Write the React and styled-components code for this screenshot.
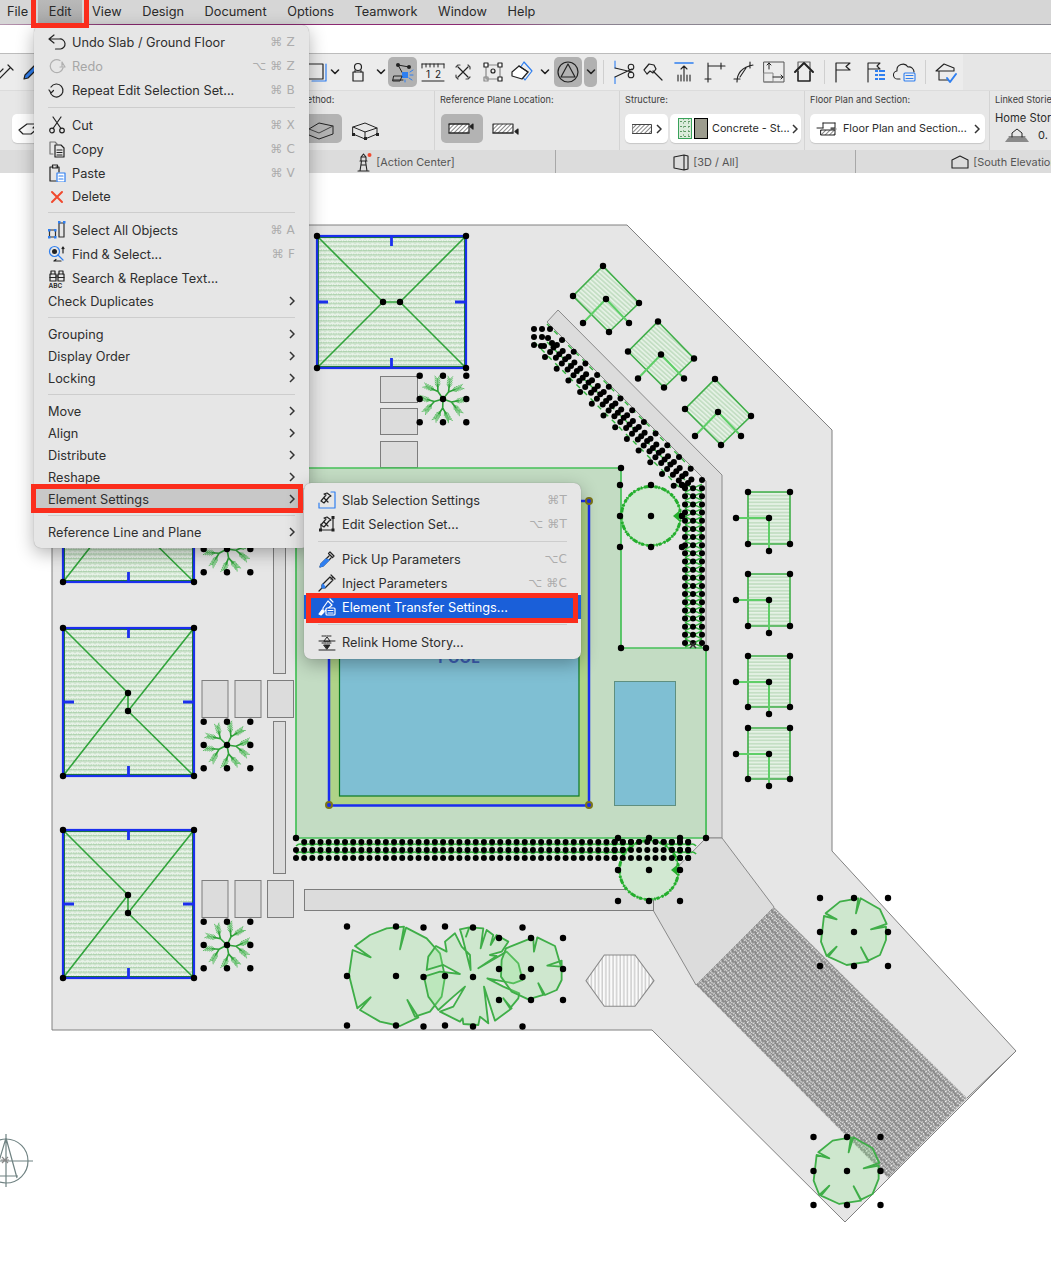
import React from 'react';
import styled, { createGlobalStyle } from 'styled-components';

const Global = createGlobalStyle`
  html, body { margin: 0; padding: 0; background: #fff; }
  body { font-family: Inter, "Liberation Sans", "DejaVu Sans", sans-serif; }
`;

const Page = styled.div`
  position: relative; width: 1051px; height: 1267px; overflow: hidden; background: #fff;
  color: #2b2b2b; -webkit-font-smoothing: antialiased;
`;

const MenuBar = styled.div`
  display: flex; align-items: center; height: 24px; padding-left: 0; background: #d6d6d6;
  border-bottom: 1px solid; border-image: linear-gradient(90deg,#b59ab0,#8c2a72 12%,#8c2a72 45%,#8a8290 55%,#8f8f96) 1;
  font-size: 12.75px; color: #2a2a2a;
`;
const MenuItem = styled.div`
  height: 24px; line-height: 23px; padding: 0 10.3px; white-space: nowrap;
  ${p => p.$first && 'padding-left: 7px;'}
  ${p => p.$active && 'background: linear-gradient(#b9b9b9,#a9a9a9);'}
`;
const WhiteStrip = styled.div` height: 28px; background: #fff; `;

const Toolbar = styled.div`
  display: flex; align-items: center; height: 36px; background: #ececec; border-top: 1px solid #bcbcbc; 
`;
const Tool = styled.div`
  flex: none; display: flex; align-items: center; justify-content: center; height: 30px;
  width: ${p => p.$w || 30}px; margin-left: ${p => p.$ml || 0}px; border-radius: 5px;
  background: ${p => (p.$active ? '#b1b1b1' : 'transparent')};
`;
const ToolSep = styled.div` flex: none; width: 1px; height: 24px; background: #cfcfcf; margin-left: ${p => p.$ml || 0}px; `;
const ToolFiller = styled.div` flex: 1; align-self: stretch; margin-left: 2px; background: #e6e6e6; `;

const InfoBar = styled.div` display: flex; height: 60px; background: #e7e7e7; border-top: 1px solid #dcdcdc; box-sizing: border-box; `;
const InfoSection = styled.div`
  flex: none; box-sizing: border-box; width: ${p => p.$w}px; padding: 3px 0 0 5px; white-space: nowrap; overflow: hidden;
  border-right: ${p => (p.$last ? 'none' : '1px solid #d4d4d4')};
`;
const InfoLabel = styled.div` font-size: 9.2px; line-height: 12px; height: 12px; color: #3d3d3d; `;
const InfoRow = styled.div` display: flex; gap: 2px; margin-top: 8px; margin-left: ${p => p.$ml || 0}px; `;
const ParamButton = styled.div`
  flex: none; box-sizing: border-box; display: flex; align-items: center; height: 29px; width: ${p => p.$w}px;
  padding: 0 ${p => p.$pr ?? p.$pad ?? 0}px 0 ${p => p.$pad || 0}px; gap: ${p => p.$gap || 4}px; border-radius: 5px; font-size: 10.8px; color: #2a2a2a;
  justify-content: ${p => p.$between ? 'space-between' : 'center'};
  background: ${p => (p.$active ? '#b3b3b3' : p.$white ? '#fff' : 'transparent')};
  box-shadow: ${p => (p.$white ? '0 1px 1px rgba(0,0,0,.14)' : 'none')};
`;
const ButtonText = styled.span` flex: 1; white-space: nowrap; margin-left: ${p => p.$ml || 0}px; `;
const Swatch = styled.span`
  flex: none; display: block; width: ${p => p.$w || 14}px; height: 21px; box-sizing: border-box;
  background: ${p => p.$bg}; border: 1px solid ${p => p.$bd};
`;
const HomeStory = styled.div` font-size: 11.2px; line-height: 14px; margin-top: 5px; `;
const StoryRow = styled.div` display: flex; align-items: center; gap: 7px; margin-left: 8px; font-size: 11px; height: 18px; margin-top: 1px; `;

const TabBar = styled.div` display: flex; height: 23px; background: #dcdcdc; `;
const Tab = styled.div`
  flex: none; box-sizing: border-box; width: ${p => p.$w || 300}px; display: flex; align-items: center; justify-content: center; gap: 3px;
  font-size: 10.9px; color: #555; white-space: nowrap;
  border-left: ${p => (p.$sep ? '1px solid #a8a8a8' : 'none')};
`;

const Plan = styled.svg` display: block; width: 1051px; height: 1094px; `;

const Menu = styled.div`
  position: absolute; left: ${p => p.$x}px; top: ${p => p.$y}px; width: ${p => p.$w}px; box-sizing: border-box; padding: 5px 0;
  background: #e6e6e6; border-radius: 7px; z-index: 5; font-size: 12.75px; color: #2e2e2e;
  box-shadow: 0 0 1px rgba(0,0,0,.35), 0 5px 18px rgba(0,0,0,.3);
`;
const Item = styled.div`
  display: flex; align-items: center; gap: 6px; height: ${p => p.$h || 24}px; padding: 0 14px; white-space: nowrap;
  color: ${p => (p.$dim ? '#a6a6a6' : p.$on ? '#fff' : 'inherit')};
  background: ${p => (p.$sel ? '#c8c8c8' : p.$on ? '#1a5fd9' : 'transparent')};
`;
const ItemIcon = styled.span` flex: none; width: 18px; height: 20px; display: flex; align-items: center; justify-content: center; `;
const ItemLabel = styled.span` flex: 1; `;
const Shortcut = styled.span`
  color: #acacac; font-size: 12px; letter-spacing: .2px; font-family: "DejaVu Sans", Inter, sans-serif;
`;
const Sep = styled.div` height: 1px; margin: ${p => p.$t ?? 5}px 14px 5px; background: #cdcdcd; `;
const Chev = styled.svg` width: 6px; height: 10px; fill: none; stroke: #333; stroke-width: 1.5; flex: none; `;
const Mark = styled.div`
  position: absolute; box-sizing: border-box; z-index: 9; border: 5px solid #fb2d1c; pointer-events: none;
  left: ${p => p.$x}px; top: ${p => p.$y}px; width: ${p => p.$w}px; height: ${p => p.$h}px;
`;
const Ico = styled.svg`
  display: block; flex: none; fill: none; stroke: ${p => p.$c || '#222'}; stroke-width: ${p => p.$sw || 1.2};
  stroke-linecap: round; stroke-linejoin: round;
`;
const I = ({ s = 24, w, h, c, sw, children }) => (
  <Ico width={w || s} height={h || s} viewBox={`0 0 ${w || s} ${h || s}`} $c={c} $sw={sw}>{children}</Ico>
);
const Arrow = () => <Chev viewBox="0 0 6 10"><path d="M1 1l4 4-4 4" /></Chev>;
const Down = () => <I w={10} h={8} sw={1.6}><path d="M1.5 2l3.5 3.5L8.5 2" /></I>;
const B = '#2f7ff0';

/* ---------- menu icons ---------- */
const UndoI = () => <I s={18}><path d="M1 6l5-4M1 6l5 4M1.5 6h10a5 5 0 0 1 1 10h-5" /></I>;
const RedoI = () => <I s={18} c="#b0b0b0"><path d="M17 10l-3-5v4M17 10l-5 0M15 11A6.5 6.5 0 1 1 12 3.5" /></I>;
const RepeatI = () => <I s={18}><path d="M3 6a6.5 6.5 0 1 1-1 4M1 9l2 3 2.5-2.5" /></I>;
const CutI = () => <I s={18}><circle cx="4" cy="14.5" r="2.3" /><circle cx="14" cy="14.5" r="2.3" /><path d="M5 12.5L13 1M13 12.5L5 1" /></I>;
const CopyI = () => <I s={18}><path d="M5 14H2V2h5l2 2" stroke="#777" /><path d="M7 5h6l3 3v9H7zM9 10h5M9 12.5h5M9 15h5" /></I>;
const PasteI = () => <I s={18}><path d="M5 3H2v14h6M11 8V3H8" /><rect x="4.5" y="1" width="5" height="3" /><path d="M9 9h8v9H9z" fill="#fff" stroke={B} /><path d="M11 12h4M11 15h4" stroke={B} /></I>;
const DeleteI = () => <I s={16} c="#f0492e" sw={2}><path d="M3 3l10 10M13 3L3 13" /></I>;
const SelectAllI = () => <I s={18}><rect x="1.5" y="9" width="6" height="7" stroke="#333" /><rect x="11" y="2" width="5" height="14" stroke="#333" /><g fill={B} stroke="none"><rect x="0" y="8" width="2.5" height="2.5" /><rect x="0" y="15" width="2.5" height="2.5" /><rect x="6" y="8" width="2.5" height="2.5" /><rect x="6" y="15" width="2.5" height="2.5" /><rect x="10" y="0" width="2.5" height="2.5" /><rect x="15" y="0" width="2.5" height="2.5" /></g></I>;
const FindI = () => <I s={18}><circle cx="6.5" cy="6.5" r="5" stroke={B} /><circle cx="6.5" cy="6.5" r="2.5" fill="#222" stroke="none" /><path d="M10 10l5 5" stroke={B} /><path d="M15 2v6M14 3.5l1-1.5 1 1.5M6 16h7M6 16l2-1.5" /></I>;
const SearchI = () => <I w={18} h={20}><rect x="2" y="6" width="6" height="7" /><rect x="10" y="6" width="6" height="7" /><path d="M3 6V3h4v3M11 6V3h4v3M8 8h2M2 9.5h6M10 9.5h6" /><text x="0.5" y="19.5" fontSize="6.5" stroke="none" fill="#222" fontFamily="Inter" fontWeight="600">ABC</text></I>;
const HammerI = ({ c = '#222' }) => <path d="M3 10l5-6-2-1 3-1 4 3-2 1-5 6zM6 7l4 4" stroke={c} />;
const SlabSelI = () => <I s={18}><HammerI /><path d="M13 1h4v16H1v-5" stroke={B} /></I>;
const EditSelI = () => <I s={18}><HammerI /><path d="M15 2v13H3V9" /><g fill="#222" stroke="none"><rect x="1" y="13.5" width="3" height="3" /><rect x="13.5" y="13.5" width="3" height="3" /><rect x="13.5" y="1" width="3" height="3" /></g></I>;
const PickI = () => <I s={18}><path d="M12 2l4 4-1.5 1.5-4-4zM11 6L3 14l-1 3 3-1 8-8" /><path d="M2 17l1-3 5-5 3 1-6 6z" fill={B} stroke={B} /></I>;
const InjectI = () => <I s={18}><path d="M13 1l4 4M15 3l-2 2M12 3l3 3-8 8H4v-3zM4 14l-3 3" /><path d="M5 10l2 3-1 1H4v-2z" fill={B} stroke={B} /></I>;
const TransferI = () => <I s={18} c="#fff"><path d="M12 1l3 3M10 3l4 4-7 6H5v-3z" /><path d="M1 16l3-4 2 2-3 3z" fill="#fff" /><rect x="8" y="10" width="9" height="7" rx="1" fill="#1a5fd9" /><path d="M10 12.5h5M10 15h5" /></I>;
const RelinkI = () => <I s={18} sw={1}><path d="M1 8h16M1 17h16M6 8l3-4 3 4z" /><path d="M4 3h10M4 10h10" strokeDasharray="1.5 1" /><path d="M6 12h6l-3 4z" fill="#222" /></I>;

/* ---------- toolbar icons ---------- */
const T = {
  pen: <I s={20}><path d="M4 16L14 6M12 3l5 5" /><path d="M-4 18L7 7" stroke="#222" /></I>,
  pick: <I s={20}><path d="M14 4l3 3-9 9-4 1 1-4z" fill={B} stroke="#222" /></I>,
  rect: <I s={22}><rect x="2" y="3" width="15" height="15" stroke="#222" /><path d="M20 3v17H6" stroke={B} /></I>,
  lock: <I s={22}><circle cx="11" cy="6" r="3.5" /><path d="M6 11h10v9H6z" /><path d="M8 9.5v1.5M14 9.5v1.5" /></I>,
  snap: <I s={24} sw={1}><circle cx="7" cy="5" r="2" fill="#222" stroke="none" /><circle cx="18" cy="7" r="2" fill="#222" stroke="none" /><path d="M7 5l11 2M7 5l5 9" /><rect x="11" y="12" width="6" height="6" fill={B} stroke="none" /><path d="M2 20h10M3 16h8l-2 5H2z" /><path d="M19 12l3-2M19 15h3M18 18l3 2M14 20v2" stroke={B} /></I>,
  ruler: <I s={24} sw={1}><path d="M1 4h22M1 21h22M1 4v4M23 4v4M5 4v3M9 4v3M13 4v3M17 4v3" /><text x="5" y="18" fontSize="10" fill="#222" stroke="none" fontFamily="Inter">1</text><text x="14" y="18" fontSize="10" fill="#222" stroke="none" fontFamily="Inter">2</text></I>,
  cross: <I s={22}><path d="M6 6l10 10M16 6L6 16" /><path d="M8 4H6L4 6M18 8V6l-2-2M14 18h2l2-2M4 14v2l2 2" stroke="#444" /></I>,
  grid: <I s={24}><rect x="5" y="5" width="14" height="14" stroke="#888" /><g fill="#fff" stroke="#222"><rect x="3" y="3" width="4" height="4" /><rect x="17" y="3" width="4" height="4" /><rect x="17" y="17" width="4" height="4" /></g><rect x="3" y="17" width="4" height="4" stroke="#888" fill="none" /><circle cx="12" cy="11" r="2" /></I>,
  dia: <I s={24}><path d="M14 2l8 9-7 9-7-9z" stroke={B} /><path d="M2 12l7-6 9 6-6 7-10-3z" fill="#fff" /><path d="M9 6l9 6" /></I>,
  tri: <I s={24}><circle cx="12" cy="12" r="10" /><path d="M12 4l7 13H5z" /></I>,
  sci: <I s={24} sw={1.1}><path d="M3 1v7M3 17v7" stroke={B} /><path d="M3 8l17 4M3 17l17-8" /><circle cx="19" cy="7" r="2.8" /><circle cx="19" cy="15" r="2.8" /></I>,
  axe: <I s={24}><path d="M2 10l5-6 5 1 2 4-3 4-3-2-3 3zM11 11l9 9" /></I>,
  up: <I s={24} sw={1.1}><path d="M3 3h18" stroke={B} strokeWidth="1.6" /><path d="M12 6v15M9 9l3-3 3 3M6 15v6M9 15v6M15 15v6M18 15v6" /></I>,
  corner: <I s={24} sw={1.1}><path d="M6 22V6h17M3 19h6M6 3v3M19 3v6" /></I>,
  arc: <I s={24} sw={1.1}><path d="M5 22C5 13 11 7 21 5M2 19h6M18 2v6M14 8l-6 9" stroke="#222" /></I>,
  mov: <I s={24} sw={1}><rect x="2" y="2" width="20" height="20" stroke="#555" /><rect x="2" y="13" width="9" height="9" stroke="#888" /><path d="M7 9V3M5 5l2-2 2 2M11 17h10M19 15l2 2-2 2" /></I>,
  house: <I s={24}><path d="M6 8V2h12v6" stroke="#666" /><path d="M6 11v10h12V11" strokeWidth="1.6" /><path d="M3 12l9-9 9 9" strokeWidth="2" /></I>,
  flag: <I s={22}><path d="M4 21V2h14l-4 3.5 4 3.5H4" /></I>,
  flagList: <I s={24} sw={1.1}><path d="M5 22V3h12l-3 3 3 3H5" /><g fill={B} stroke="none"><rect x="12" y="10" width="3" height="2" /><rect x="16" y="10" width="6" height="2" /><rect x="12" y="14" width="3" height="2" /><rect x="16" y="14" width="6" height="2" /><rect x="12" y="18" width="3" height="2" /><rect x="16" y="18" width="6" height="2" /></g></I>,
  cloud: <I s={24} sw={1.1}><path d="M7 19H5a4 4 0 0 1-1-8 6 6 0 0 1 11-4 5 5 0 0 1 6 5" /><rect x="11" y="13" width="11" height="8" rx="1" stroke={B} fill="#ececec" /><path d="M13 15.5h7M13 18.5h7" stroke={B} /></I>,
  houseCheck: <I s={24} sw={1.1}><path d="M2 11l8-7 10 4v3H2zM5 11v9h9" /><path d="M13 18l3 4 6-8" stroke={B} strokeWidth="2" /></I>,
};

/* ---------- plan helpers ---------- */
const Dot = ({ x, y, r = 3.2 }) => <circle cx={x} cy={y} r={r} fill="#000" />;
const Handles9 = ({ cx, cy, dx, dy }) => (
  <g>{[-1, 0, 1].flatMap(a => [-1, 0, 1].map(b => <Dot key={a + '_' + b} x={cx + a * dx} y={cy + b * dy} />))}</g>
);

const StarTree = ({ x, y, rot = 10 }) => {
  const seg = [];
  const thick = [];
  for (let i = 0; i < 5; i++) {
    const a0 = (rot + i * 72) * Math.PI / 180;
    const fx = Math.cos(a0) * 9, fy = Math.sin(a0) * 9;
    thick.push(`M0 0L${fx} ${fy}`);
    [-0.55, 0.55].forEach(d => {
      const a = a0 + d;
      const ex = fx + Math.cos(a) * 13.5, ey = fy + Math.sin(a) * 13.5;
      thick.push(`M${fx} ${fy}L${fx + (ex - fx) * .55} ${fy + (ey - fy) * .55}`);
      [0.3, 0.45, 0.6, 0.75, 0.9].forEach(t => {
        const px = fx + (ex - fx) * t, py = fy + (ey - fy) * t;
        [-0.6, 0.6].forEach(s => seg.push(`M${px} ${py}l${Math.cos(a + s) * 4.6} ${Math.sin(a + s) * 4.6}`));
      });
      seg.push(`M${fx + (ex - fx) * .5} ${fy + (ey - fy) * .5}L${ex} ${ey}`);
    });
  }
  return (
    <g transform={`translate(${x} ${y})`} fill="none">
      <path d={seg.join('')} stroke="#4fb958" strokeWidth=".85" />
      <path d={thick.join('')} stroke="#2ea038" strokeWidth="1.6" />
    </g>
  );
};

const Roof = ({ x, y, w, h, c1, c2 }) => (
  <g>
    <rect x={x} y={y} width={w} height={h} fill="url(#roof)" />
    <path d={`M${x} ${y}L${c1[0]} ${c1[1]}L${c2[0]} ${c2[1]}L${x + w} ${y}M${x} ${y + h}L${c1[0]} ${c1[1]}M${x + w} ${y + h}L${c2[0]} ${c2[1]}`} stroke="#31a43b" strokeWidth="1.6" fill="none" />
    <rect x={x + 1.5} y={y + 1.5} width={w - 3} height={h - 3} fill="none" stroke="#1d7a35" strokeWidth="1" />
    <rect x={x} y={y} width={w} height={h} fill="none" stroke="#1b2fee" strokeWidth="2.2" />
    <path d={`M${x + w / 2} ${y}v10M${x + w / 2} ${y + h}v-10M${x} ${y + h / 2}h11M${x + w} ${y + h / 2}h-11`} stroke="#1b2fee" strokeWidth="2.8" fill="none" />
    {[[x, y], [x + w, y], [x, y + h], [x + w, y + h], c1, c2].map((p, i) => <Dot key={i} x={p[0]} y={p[1]} />)}
  </g>
);

const Planter = ({ pts, c, l, r, fill }) => (
  <g>
    <polygon points={pts.map(p => p.join(',')).join(' ')} fill={fill} stroke="#3fae48" strokeWidth="1.6" />
    <path d={`M${c[0]} ${c[1]}L${l[0]} ${l[1]}M${c[0]} ${c[1]}L${r[0]} ${r[1]}`} stroke="#5fcf68" strokeWidth="2" />
    {[...pts, c, l, r].map((p, i) => <Dot key={i} x={p[0]} y={p[1]} />)}
  </g>
);

const RoundTree = ({ x, y, r }) => (
  <g>
    <circle cx={x} cy={y} r={r} fill="#d2e8d2" />
    <circle cx={x} cy={y} r={r - .5} fill="none" stroke="#3cba45" strokeWidth="1.4" />
    <circle cx={x} cy={y} r={r - .5} fill="none" stroke="#24ae2d" strokeWidth="3" strokeDasharray="3 .9 1.5 1.8 5 1.2 2 2.4" />
    <path d={`M${x + r - 8} ${y}l6 -5v10z`} fill="#24ae2d" />
  </g>
);

const treeFill = { fill: '#8ee98e', fillOpacity: .27, stroke: '#3fae48', strokeWidth: 5.5, strokeLinejoin: 'round' };
const T1 = 'M225,378L272,412L218,390L207,465L232,565L272,532L240,570L300,605L360,618L415,592L382,540L405,590L450,575L485,530L495,470L480,400L440,355L378,323L360,388L372,320L320,325L270,345Z';
const T2 = 'M445,410L468,378L500,395L495,365L525,340L545,380L570,405L572,450L548,355L540,328L568,322L558,350L568,322L610,325L602,385L620,330L640,345L632,375L650,345L685,365L665,395L630,405L650,408L595,445L680,395L715,430L728,480L700,490L622,475L670,500L718,520L715,535L690,565L670,535L695,565L645,602L612,500L625,610L600,590L595,615L550,612L548,595L540,605L480,575L520,560L555,500L520,530L475,570L445,530L432,470L480,455L540,462L490,435L440,450Z';
const T3 = 'M678,385L760,352L762,395L772,352L825,378L843,440L802,437L845,422L845,480L830,510L795,525L775,490L790,525L745,538L695,515L663,470L665,420Z';
const T4 = 'M527,250L560,268L522,258L513,335L530,378L560,350L535,380L590,405L655,395L633,352L655,392L690,375L708,330L708,290L663,298L710,282L690,238L632,205L618,250L625,205L570,215Z';

const hedgeBottom = [];
for (let r = 0; r < 3; r++) for (let k = r === 0 ? 1 : 0; k <= 48; k++) hedgeBottom.push([296 + k * 8.17, 842 + r * 8]);
const hedgeRight = [];
[685, 693, 702].forEach((x, i) => { for (let k = i === 2 ? 0 : 1; k <= 20; k++) hedgeRight.push([x, 480 + k * 8.15]); });
const hedgeDiag = [[534, 329], [542, 329], [550, 329], [534, 337], [542, 337], [534, 345], [548, 338], [544, 346], [552, 343], [541, 346]];
for (let i = 0; i < 12; i++) {
  const x = 553.5 + i * 11.7, y = 348.5 + i * 11.7;
  hedgeDiag.push([x + 8.5, y - 8.5], [x - 8.5, y + 8.5], [x + 3.4, y - 3.4], [x - 3.4, y + 3.4], [x + 9.2, y + 2.4], [x + 2.4, y + 9.2], [x, y - 1], [x + 5.8, y + 5.8]);
}

const MenuGroup1 = [
  ['Undo Slab / Ground Floor', '⌘ Z', <UndoI />], ['Redo', '⌥ ⌘ Z', <RedoI />, true], ['Repeat Edit Selection Set...', '⌘ B', <RepeatI />], 0,
  ['Cut', '⌘ X', <CutI />], ['Copy', '⌘ C', <CopyI />], ['Paste', '⌘ V', <PasteI />], ['Delete', '', <DeleteI />, false, 23], 1,
  ['Select All Objects', '⌘ A', <SelectAllI />], ['Find & Select...', '⌘ F', <FindI />], ['Search & Replace Text...', '', <SearchI />],
];

export default function App() {
  return (
    <Page>
      <Global />
      <MenuBar>
        {['File', 'Edit', 'View', 'Design', 'Document', 'Options', 'Teamwork', 'Window', 'Help'].map((m, i) => (
          <MenuItem key={m} $first={i === 0} $active={m === 'Edit'}>{m}</MenuItem>
        ))}
      </MenuBar>
      <WhiteStrip />
      <Toolbar>
        <Tool $w={12}>{T.pen}</Tool>
        <Tool $w={36}>{T.pick}</Tool>
        <Tool $w={257} />
        <Tool $w={24}>{T.rect}</Tool>
        <Tool $w={12}><Down /></Tool>
        <Tool $w={24} $ml={5}>{T.lock}</Tool>
        <Tool $w={12} $ml={5}><Down /></Tool>
        <Tool $w={29} $ml={1} $active>{T.snap}</Tool>
        <Tool $w={28} $ml={2}>{T.ruler}</Tool>
        <Tool $ml={1}>{T.cross}</Tool>
        <Tool>{T.grid}</Tool>
        <Tool $w={28}>{T.dia}</Tool>
        <Tool $w={12} $ml={3}><Down /></Tool>
        <Tool $w={28} $ml={3} $active>{T.tri}</Tool>
        <Tool $w={13} $ml={2} $active><Down /></Tool>
        <ToolSep $ml={6} />
        <Tool $ml={5}>{T.sci}</Tool>
        <Tool>{T.axe}</Tool>
        <Tool>{T.up}</Tool>
        <Tool>{T.corner}</Tool>
        <Tool>{T.arc}</Tool>
        <Tool>{T.mov}</Tool>
        <Tool>{T.house}</Tool>
        <ToolSep $ml={5} />
        <Tool $ml={3}>{T.flag}</Tool>
        <Tool $ml={2}>{T.flagList}</Tool>
        <Tool>{T.cloud}</Tool>
        <ToolSep $ml={5} />
        <Tool $ml={5}>{T.houseCheck}</Tool>
        <ToolFiller />
      </Toolbar>
      <InfoBar>
        <InfoSection $w={248}>
          <InfoLabel />
          <InfoRow $ml={7}>
            <ParamButton $w={60} $white $pad={5} $between><I s={24}><path d="M2 13l8-6h10l-4 4h5l-7 6-8 0z" /></I></ParamButton>
          </InfoRow>
        </InfoSection>
        <InfoSection $w={187}>
          <InfoLabel>Geometry Method:</InfoLabel>
          <InfoRow $ml={47}>
            <ParamButton $w={42} $active><I s={30} sw={1}><path d="M3 15l10-6 14 3v8L13 25 3 21z" /><path d="M3 15l10 4 14-7M3 21" stroke="#444" /></I></ParamButton>
            <ParamButton $w={42}><I s={30} sw={1}><path d="M3 13l12-4 12 5v6l-12 5-12-5zM3 13l12 5 12-4M15 18v7" /><g fill="#222" stroke="none"><rect x="2" y="19" width="3" height="3" /><rect x="14" y="23" width="3" height="3" /><rect x="26" y="19" width="3" height="3" /></g></I></ParamButton>
          </InfoRow>
        </InfoSection>
        <InfoSection $w={185}>
          <InfoLabel>Reference Plane Location:</InfoLabel>
          <InfoRow $ml={1}>
            <ParamButton $w={42} $active><I w={32} h={20}><rect x="3" y="5" width="20" height="9" fill="url(#ih)" stroke="#333" /><path d="M3 5h20M3 14h20" /><path d="M27 5l-3 2.5 3 2.5z" fill="#222" /></I></ParamButton>
            <ParamButton $w={42}><I w={32} h={20}><rect x="3" y="5" width="20" height="9" fill="url(#ih)" stroke="#333" /><path d="M3 14h20" /><path d="M28 10l-3 2.5 3 2.5z" fill="#222" /></I></ParamButton>
          </InfoRow>
        </InfoSection>
        <InfoSection $w={185}>
          <InfoLabel>Structure:</InfoLabel>
          <InfoRow>
            <ParamButton $w={43} $white $pad={7} $between>
              <I w={20} h={10} sw={1}><rect x=".5" y=".5" width="19" height="9" fill="url(#ih)" stroke="#444" /></I><Arrow />
            </ParamButton>
            <ParamButton $w={131} $white $pad={8} $pr={5} $gap={2} $between>
              <Swatch $bg="radial-gradient(#5f9a66 .7px, transparent .9px) 0 0/4px 5px, radial-gradient(#7fae85 .6px, transparent .8px) 2px 2px/5px 4px, #dcecdc" $bd="#39a25a" />
              <Swatch $bg="#9c9c8e" $bd="#000" />
              <ButtonText $ml={2}>Concrete - St...</ButtonText><Arrow />
            </ParamButton>
          </InfoRow>
        </InfoSection>
        <InfoSection $w={185}>
          <InfoLabel>Floor Plan and Section:</InfoLabel>
          <InfoRow>
            <ParamButton $w={175} $white $pad={5} $between>
              <I w={24} h={20} sw={1}><path d="M8 4h12M8 4v5M20 4v5h-4M2 9h6M16 10h5" /><rect x="6" y="11" width="14" height="5" fill="url(#ih)" stroke="#222" /></I>
              <ButtonText>Floor Plan and Section...</ButtonText><Arrow />
            </ParamButton>
          </InfoRow>
        </InfoSection>
        <InfoSection $w={61} $last>
          <InfoLabel>Linked Stories:</InfoLabel>
          <HomeStory>Home Story:</HomeStory>
          <StoryRow>
            <I w={28} h={16} sw={1}><path d="M9 10V6l5-4 5 4v4" /><path d="M6 10h16" /><path d="M2 15l3-4h18l3 4z" fill="#8a8a8a" stroke="none" /></I>
            <span>0.</span>
          </StoryRow>
        </InfoSection>
      </InfoBar>
      <TabBar>
        <Tab $w={255} />
        <Tab>
          <I w={18} h={20} sw={1.1}><path d="M3 19h11M5 19l1.5-10h4L12 19M5 9h7M6 9V5h5v4M6 5l2.5-3L11 5M6 13h5" /><circle cx="14.5" cy="3" r="2" fill="#f04a30" stroke="none" /></I>
          <span>[Action Center]</span>
        </Tab>
        <Tab $sep>
          <I w={18} h={18} sw={1.1}><path d="M2 4l10-2 4 1v13l-4 1-10-2zM12 2v15" /></I>
          <span>[3D / All]</span>
        </Tab>
        <Tab $sep>
          <I w={20} h={16} sw={1.1}><path d="M2 6l8-4 8 4v8H2z" /></I>
          <span>[South Elevation]</span>
        </Tab>
      </TabBar>

      <Plan viewBox="0 173 1051 1094">
        <defs>
          <pattern id="ih" width="3" height="3" patternUnits="userSpaceOnUse" patternTransform="rotate(-45)">
            <rect width="3" height="3" fill="#fff" /><path d="M0 0H3" stroke="#444" strokeWidth="1.3" />
          </pattern>
          <pattern id="roof" width="5" height="4.4" patternUnits="userSpaceOnUse">
            <rect width="5" height="4.4" fill="#cde3cd" />
            <path d="M0 3.2Q2.5 .1 5 3.2" stroke="#f0f7f0" strokeWidth="1" fill="none" />
            <path d="M0 4.1H5" stroke="#9fca9f" strokeWidth=".8" />
            <path d="M2.5 2.2V3.7" stroke="#f0f7f0" strokeWidth=".9" />
          </pattern>
          <pattern id="stripeH" width="6" height="3.4" patternUnits="userSpaceOnUse">
            <rect width="6" height="3.4" fill="#d8ebd8" />
            <path d="M0 .8H6" stroke="#eef6ee" strokeWidth="1" /><path d="M0 2.6H6" stroke="#a7cda7" strokeWidth=".8" />
          </pattern>
          <pattern id="stripeD" width="6" height="3.4" patternUnits="userSpaceOnUse" patternTransform="rotate(42)">
            <rect width="6" height="3.4" fill="#d8ebd8" />
            <path d="M0 .8H6" stroke="#eef6ee" strokeWidth="1" /><path d="M0 2.6H6" stroke="#a7cda7" strokeWidth=".8" />
          </pattern>
          <pattern id="paver" width="7" height="7" patternUnits="userSpaceOnUse" patternTransform="rotate(-45)">
            <rect width="7" height="7" fill="#868686" />
            <path d="M.6 1.2h2.6M4 3.2h2.6M.8 5.6h2.6M4.6 .4v1.6M2.4 2.6v1.6M5.4 4.8v1.6M4.2 6.4h1" stroke="#f4f4f4" strokeWidth="1.05" />
          </pattern>
          <pattern id="hex" width="3.6" height="4" patternUnits="userSpaceOnUse">
            <rect width="3.6" height="4" fill="#fafafa" /><path d="M1 0V4" stroke="#999" strokeWidth=".7" />
          </pattern>
        </defs>

        <polygon points="52,225 627,225 832,430 832,851 1016,1051 845,1222 652,1030 52,1030" fill="#e6e6e6" stroke="#808080" strokeWidth="1" />
        <polygon points="558,310 722,475 722,838 706,838 706,481 547,322" fill="#dcdcdc" stroke="#8a8a8a" strokeWidth="1" />
        <polygon points="706,838 722,838 774,907 696,985 653,910 653,892" fill="#dcdcdc" stroke="#8a8a8a" strokeWidth="1" />
        <polygon points="774,907 967,1098 888,1178 696,985" fill="url(#paver)" />
        <path d="M1016 1051L967 1098" stroke="#808080" />

        {/* grey blocks */}
        <g fill="#dcdcdc" stroke="#7d7d7d" strokeWidth="1">
          <rect x="380.5" y="376.5" width="37" height="26" /><rect x="380.5" y="408.5" width="37" height="26" /><rect x="380.5" y="441.5" width="37" height="26" />
          <rect x="273.5" y="545.5" width="12" height="128" /><rect x="273.5" y="721.5" width="12" height="152" />
          {[680, 880].map(y => [[202, 26], [235, 26], [267.5, 26]].map(([x, w]) => <rect key={x + '' + y} x={x} y={y + .5} width={w} height={37} />))}
          <rect x="304.5" y="889.5" width="349" height="21" />
        </g>

        {/* patio and pools */}
        <polygon points="296,468 621,468 621,648 706,648 706,838 296,838" fill="#c3dcc3" stroke="#46c058" strokeWidth="1.7" />
        <rect x="329" y="501" width="260" height="304.5" fill="#afd388" />
        <rect x="339.5" y="511" width="239.5" height="285" fill="#7fbfd3" stroke="#0a7a22" strokeWidth="1.2" />
        <rect x="329" y="501" width="260" height="304.5" fill="none" stroke="#1a2cf0" strokeWidth="2.5" />
        <rect x="614.5" y="681.5" width="61" height="124" fill="#7fbfd3" stroke="#5f8f80" strokeWidth="1" />
        <text x="459" y="663" textAnchor="middle" fontSize="15" fontWeight="700" fill="#3f62b8" fontFamily="Inter, sans-serif">POOL</text>
        {[[329, 805], [589, 805], [589, 501]].map(([x, y]) => <circle key={x + '' + y} cx={x} cy={y} r="3" fill="#1a2cf0" stroke="#7d7518" strokeWidth="2" />)}

        {/* roofs */}
        <Roof x={317} y={236} w={149} h={132} c1={[383, 302]} c2={[400, 302]} />
        <Roof x={63} y={434} w={131} h={148} c1={[128, 499]} c2={[128, 517]} />
        <Roof x={63} y={628} w={131} h={148} c1={[128, 693]} c2={[128, 711]} />
        <Roof x={63} y={830} w={131} h={148} c1={[128, 895]} c2={[128, 913]} />

        {/* star trees */}
        {[[443, 399, 20], [227, 549, 80], [227, 745, 80], [227, 945, 80]].map(([x, y, r]) => (
          <g key={y}>
            <StarTree x={x} y={y} rot={r} />
            <Handles9 cx={x} cy={y} dx={23.3} dy={23.3} />
          </g>
        ))}

        {/* diagonal planters */}
        {[0, 1, 2].map(i => {
          const o = [[0, 0], [55, 55.5], [112, 113]][i];
          const m = ([x, y]) => [x + o[0], y + o[1]];
          return <Planter key={i} fill="url(#stripeD)" pts={[[603, 266], [639, 303], [609, 332], [573, 296]].map(m)} c={m([606, 299])} l={m([583, 323])} r={m([629, 323])} />;
        })}
        {/* straight planters */}
        {[[492, 544, 518, 551], [574, 626, 600, 633], [656, 707, 682, 714], [728, 779, 754, 786]].map(([t, b, c, e]) => (
          <Planter key={t} fill="url(#stripeH)" pts={[[748, t], [790, t], [790, b], [748, b]]} c={[769, c]} l={[736, c]} r={[769, e]} />
        ))}

        {/* hedges */}
        <rect x="296" y="840" width="395" height="20" fill="#dcebdc" />
        <path d={hedgeBottom.filter(p => p[1] !== 842).map(([x, y]) => `M${x} ${y - 4}q4 -4 8 0`).join('')} stroke="#2fb23a" strokeWidth="1.5" fill="none" />
        {hedgeBottom.map(([x, y], i) => <Dot key={i} x={x} y={y} r={3} />)}
        <path d={hedgeRight.filter(p => p[0] === 693).map(([x, y]) => `M685 ${y - 4}l17 8M702 ${y - 4}l-17 8`).join('')} stroke="#2fb23a" strokeWidth="1.4" />
        {hedgeRight.map(([x, y], i) => <Dot key={i} x={x} y={y} r={3} />)}
        <path d="M540 335L690 485M547 324L695 472M534 342L682 490" stroke="#2fb23a" strokeWidth="1.4" strokeDasharray="5 5" />
        {hedgeDiag.map(([x, y], i) => <Dot key={i} x={x} y={y} r={3} />)}
        <path d="M690 642l6 6M696 642l-6 6" stroke="#333" strokeWidth="1.5" />

        {/* round trees */}
        <RoundTree x={651} y={516} r={30} />
        <Handles9 cx={651} cy={516} dx={31} dy={31} />
        <RoundTree x={649} y={870} r={30} />
        <g><Dot x={618} y={901} /><Dot x={649} y={901} /><Dot x={680} y={901} /><Dot x={618} y={870} /><Dot x={649} y={870} /><Dot x={680} y={870} /></g>
        {hedgeBottom.filter(p => p[0] > 610).map(([x, y], i) => <Dot key={i} x={x} y={y} r={3} />)}
        <Dot x={706} y={838} /><Dot x={621} y={468} /><Dot x={621} y={648} /><Dot x={706} y={648} />
        <Dot x={296} y={838} /><Dot x={618} y={838} /><Dot x={649} y={838} /><Dot x={680} y={838} />

        {/* large trees */}
        <g transform="translate(280 820) scale(.3333)">
          <path d={T1} {...treeFill} /><path d={T2} {...treeFill} /><path d={T3} {...treeFill} />
        </g>
        <polygon points="604.3,955 635,955 654,980.7 635,1006.3 604.3,1006.3 586,980.7" fill="url(#hex)" stroke="#8a8a8a" strokeWidth="1.1" />
        <Handles9 cx={396} cy={976} dx={49} dy={49.5} />
        <Handles9 cx={473} cy={977} dx={49.5} dy={49.5} />
        <Handles9 cx={531} cy={969} dx={32} dy={31} />
        <g transform="translate(650 830) scale(.3333)">
          <path d={T4} {...treeFill} />
          <path d={T4} {...treeFill} transform="translate(-22 717)" />
        </g>
        <Handles9 cx={854} cy={932} dx={34} dy={34} />
        <Handles9 cx={847} cy={1171} dx={33.5} dy={34} />

        {/* compass */}
        <g stroke="#6f8282" strokeWidth="1.2" fill="none">
          <circle cx="6" cy="1161" r="22" />
          <path d="M6 1134V1187M-20 1161H33M6 1138L-6 1178M6 1138L17 1178M-6 1176H18" />
          <path d="M2 1157l6 6M8 1157l-6 6M1 1160h8" stroke="#888" />
        </g>
      </Plan>

      <Mark $x={31} $y={-5} $w={58} $h={33} />
      <Menu $x={34} $y={25} $w={275}>
        {MenuGroup1.map((m, i) => (m === 0 || m === 1) ? <Sep key={i} $t={m === 1 ? 4 : 5} /> : (
          <Item key={m[0]} $dim={m[3]} $h={m[4]}>
            <ItemIcon>{m[2]}</ItemIcon>
            <ItemLabel>{m[0]}</ItemLabel>
            <Shortcut>{m[1]}</Shortcut>
          </Item>
        ))}
        <Item $h={22}><ItemLabel>Check Duplicates</ItemLabel><Arrow /></Item>
        <Sep />
        {['Grouping', 'Display Order', 'Locking'].map(t => <Item key={t} $h={22}><ItemLabel>{t}</ItemLabel><Arrow /></Item>)}
        <Sep />
        {['Move', 'Align', 'Distribute', 'Reshape'].map(t => <Item key={t} $h={22}><ItemLabel>{t}</ItemLabel><Arrow /></Item>)}
        <Item $h={22} $sel><ItemLabel>Element Settings</ItemLabel><Arrow /></Item>
        <Sep />
        <Item $h={22}><ItemLabel>Reference Line and Plane</ItemLabel><Arrow /></Item>
      </Menu>
      <Mark $x={31} $y={484} $w={272} $h={29} />

      <Menu $x={304} $y={483} $w={277}>
        <Item><ItemIcon><SlabSelI /></ItemIcon><ItemLabel>Slab Selection Settings</ItemLabel><Shortcut>⌘T</Shortcut></Item>
        <Item><ItemIcon><EditSelI /></ItemIcon><ItemLabel>Edit Selection Set...</ItemLabel><Shortcut>⌥ ⌘T</Shortcut></Item>
        <Sep />
        <Item><ItemIcon><PickI /></ItemIcon><ItemLabel>Pick Up Parameters</ItemLabel><Shortcut>⌥C</Shortcut></Item>
        <Item><ItemIcon><InjectI /></ItemIcon><ItemLabel>Inject Parameters</ItemLabel><Shortcut>⌥ ⌘C</Shortcut></Item>
        <Item $on><ItemIcon><TransferI /></ItemIcon><ItemLabel>Element Transfer Settings...</ItemLabel></Item>
        <Sep />
        <Item><ItemIcon><RelinkI /></ItemIcon><ItemLabel>Relink Home Story...</ItemLabel></Item>
      </Menu>
      <Mark $x={306} $y={593} $w={272} $h={30} />
    </Page>
  );
}
